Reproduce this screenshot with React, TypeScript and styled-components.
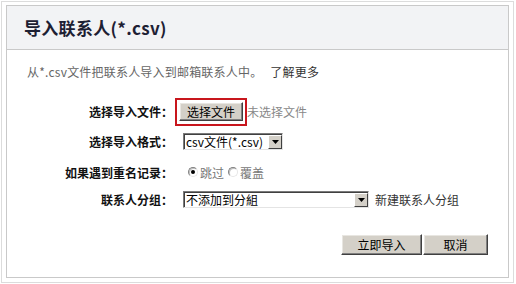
import styled, { createGlobalStyle } from "styled-components";

const GlobalStyle = createGlobalStyle`
  html, body {
    margin: 0;
    padding: 0;
    background: #ffffff;
  }
  body {
    font-family: "Noto Sans CJK SC", "Liberation Sans", sans-serif;
    font-size: 12px;
    color: #000;
  }
`;

const Frame = styled.div`
  box-sizing: border-box;
  margin: 1px 0 0 1px;
  width: 513px;
  height: 282px;
  border: 1px solid #dcdcdc;
  padding: 3px 4px 4px 4px;
`;

const Panel = styled.div`
  box-sizing: border-box;
  height: 100%;
  border: 1px solid #c9c9c9;
  display: flex;
  flex-direction: column;
`;

const Header = styled.div`
  height: 43px;
  background: #f2f3f5;
  border-bottom: 1px solid #c9c9c9;
  display: flex;
  align-items: center;
  padding-left: 17px;
`;

const Title = styled.h1`
  margin: 0;
  font-size: 17px;
  font-weight: 700;
  color: #1d2033;
  letter-spacing: 0.3px;
`;

const Intro = styled.p`
  margin: 12px 0 0 20px;
  line-height: 20px;
  color: #666;
  letter-spacing: 0.2px;

  a {
    color: #333;
    text-decoration: none;
    margin-left: 8px;
  }
`;

const Form = styled.div`
  margin-top: 15px;
  display: grid;
  grid-template-columns: 166px 1fr;
  column-gap: 2px;
`;

const Label = styled.div<{ $h: number }>`
  height: ${(p) => p.$h}px;
  display: flex;
  align-items: center;
  justify-content: flex-end;
  font-weight: 700;
  color: #111;
  white-space: nowrap;
`;

const Field = styled.div<{ $h: number; $indent?: number }>`
  height: ${(p) => p.$h}px;
  display: flex;
  align-items: center;
  padding-left: ${(p) => p.$indent ?? 0}px;
  white-space: nowrap;
`;

const Highlight = styled.div`
  border: 2px solid #c8161d;
  padding: 2px 2px 3px 2px;
  display: flex;
`;

const ClassicButton = styled.button<{ $w: number; $h: number }>`
  box-sizing: border-box;
  width: ${(p) => p.$w}px;
  height: ${(p) => p.$h}px;
  padding: 0;
  font-family: inherit;
  font-size: 12px;
  color: #000;
  background: #d4d0c8;
  border: 1px solid;
  border-color: #ffffff #404040 #404040 #ffffff;
  box-shadow: inset -1px -1px 0 #808080, inset 1px 1px 0 #e8e6e1;
  border-radius: 0;
  cursor: pointer;
`;

const Muted = styled.span`
  color: #888;
`;

const SelectBox = styled.div<{ $w: number }>`
  box-sizing: border-box;
  width: ${(p) => p.$w}px;
  height: 17px;
  display: flex;
  align-items: stretch;
  background: #fff;
  border: 1px solid;
  border-color: #7a7a7a #e4e4e4 #e4e4e4 #7a7a7a;
  box-shadow: inset 1px 1px 0 #404040;
`;

const SelectText = styled.span`
  flex: 1;
  padding-left: 2px;
  line-height: 15px;
  color: #000;
  white-space: nowrap;
`;

const ArrowButton = styled.span`
  box-sizing: border-box;
  width: 14px;
  margin: 1px 0 0 0;
  background: #d4d0c8;
  border: 1px solid;
  border-color: #ffffff #404040 #404040 #ffffff;
  display: flex;
  align-items: center;
  justify-content: center;
`;

const RadioGroup = styled.label`
  display: inline-flex;
  align-items: center;
  color: #777;
  margin-right: 4px;
`;

const RadioCircle = styled.span<{ $checked?: boolean }>`
  box-sizing: border-box;
  width: 10px;
  height: 10px;
  border-radius: 50%;
  background: #fff;
  border: 1px solid;
  border-color: #808080 #e6e6e6 #e6e6e6 #808080;
  box-shadow: inset 1px 1px 0 #c0c0c0;
  margin-right: 2px;
  display: flex;
  align-items: center;
  justify-content: center;

  &::after {
    content: "";
    width: 4px;
    height: 4px;
    border-radius: 50%;
    background: ${(p) => (p.$checked ? "#000" : "transparent")};
  }
`;

const Link = styled.span`
  color: #333;
  margin-left: 6px;
`;

const Actions = styled.div`
  margin-top: 23px;
  padding-right: 20px;
  display: flex;
  justify-content: flex-end;
  gap: 1px;
`;

function Arrow() {
  return (
    <ArrowButton>
      <svg width="7" height="4" viewBox="0 0 7 4">
        <polygon points="0,0 7,0 3.5,4" fill="#000" />
      </svg>
    </ArrowButton>
  );
}

function Select({ value, width }: { value: string; width: number }) {
  return (
    <SelectBox $w={width}>
      <SelectText>{value}</SelectText>
      <Arrow />
    </SelectBox>
  );
}

function App() {
  return (
    <>
      <GlobalStyle />
      <Frame>
        <Panel>
          <Header>
            <Title>导入联系人(*.csv)</Title>
          </Header>
          <Intro>
            从*.csv文件把联系人导入到邮箱联系人中。
            <a href="#">了解更多</a>
          </Intro>
          <Form>
            <Label $h={29}>选择导入文件：</Label>
            <Field $h={29}>
              <Highlight>
                <ClassicButton $w={64} $h={19}>
                  选择文件
                </ClassicButton>
              </Highlight>
              <Muted>未选择文件</Muted>
            </Field>

            <Label $h={31}>选择导入格式：</Label>
            <Field $h={31} $indent={8}>
              <Select value="csv文件(*.csv)" width={100} />
            </Field>

            <Label $h={30}>如果遇到重名记录：</Label>
            <Field $h={30} $indent={13}>
              <RadioGroup>
                <RadioCircle $checked />
                跳过
              </RadioGroup>
              <RadioGroup>
                <RadioCircle />
                覆盖
              </RadioGroup>
            </Field>

            <Label $h={24}>联系人分组：</Label>
            <Field $h={24} $indent={8}>
              <Select value="不添加到分組" width={186} />
              <Link>新建联系人分组</Link>
            </Field>
          </Form>
          <Actions>
            <ClassicButton $w={81} $h={21}>
              立即导入
            </ClassicButton>
            <ClassicButton $w={65} $h={21}>
              取消
            </ClassicButton>
          </Actions>
        </Panel>
      </Frame>
    </>
  );
}

export default App;
